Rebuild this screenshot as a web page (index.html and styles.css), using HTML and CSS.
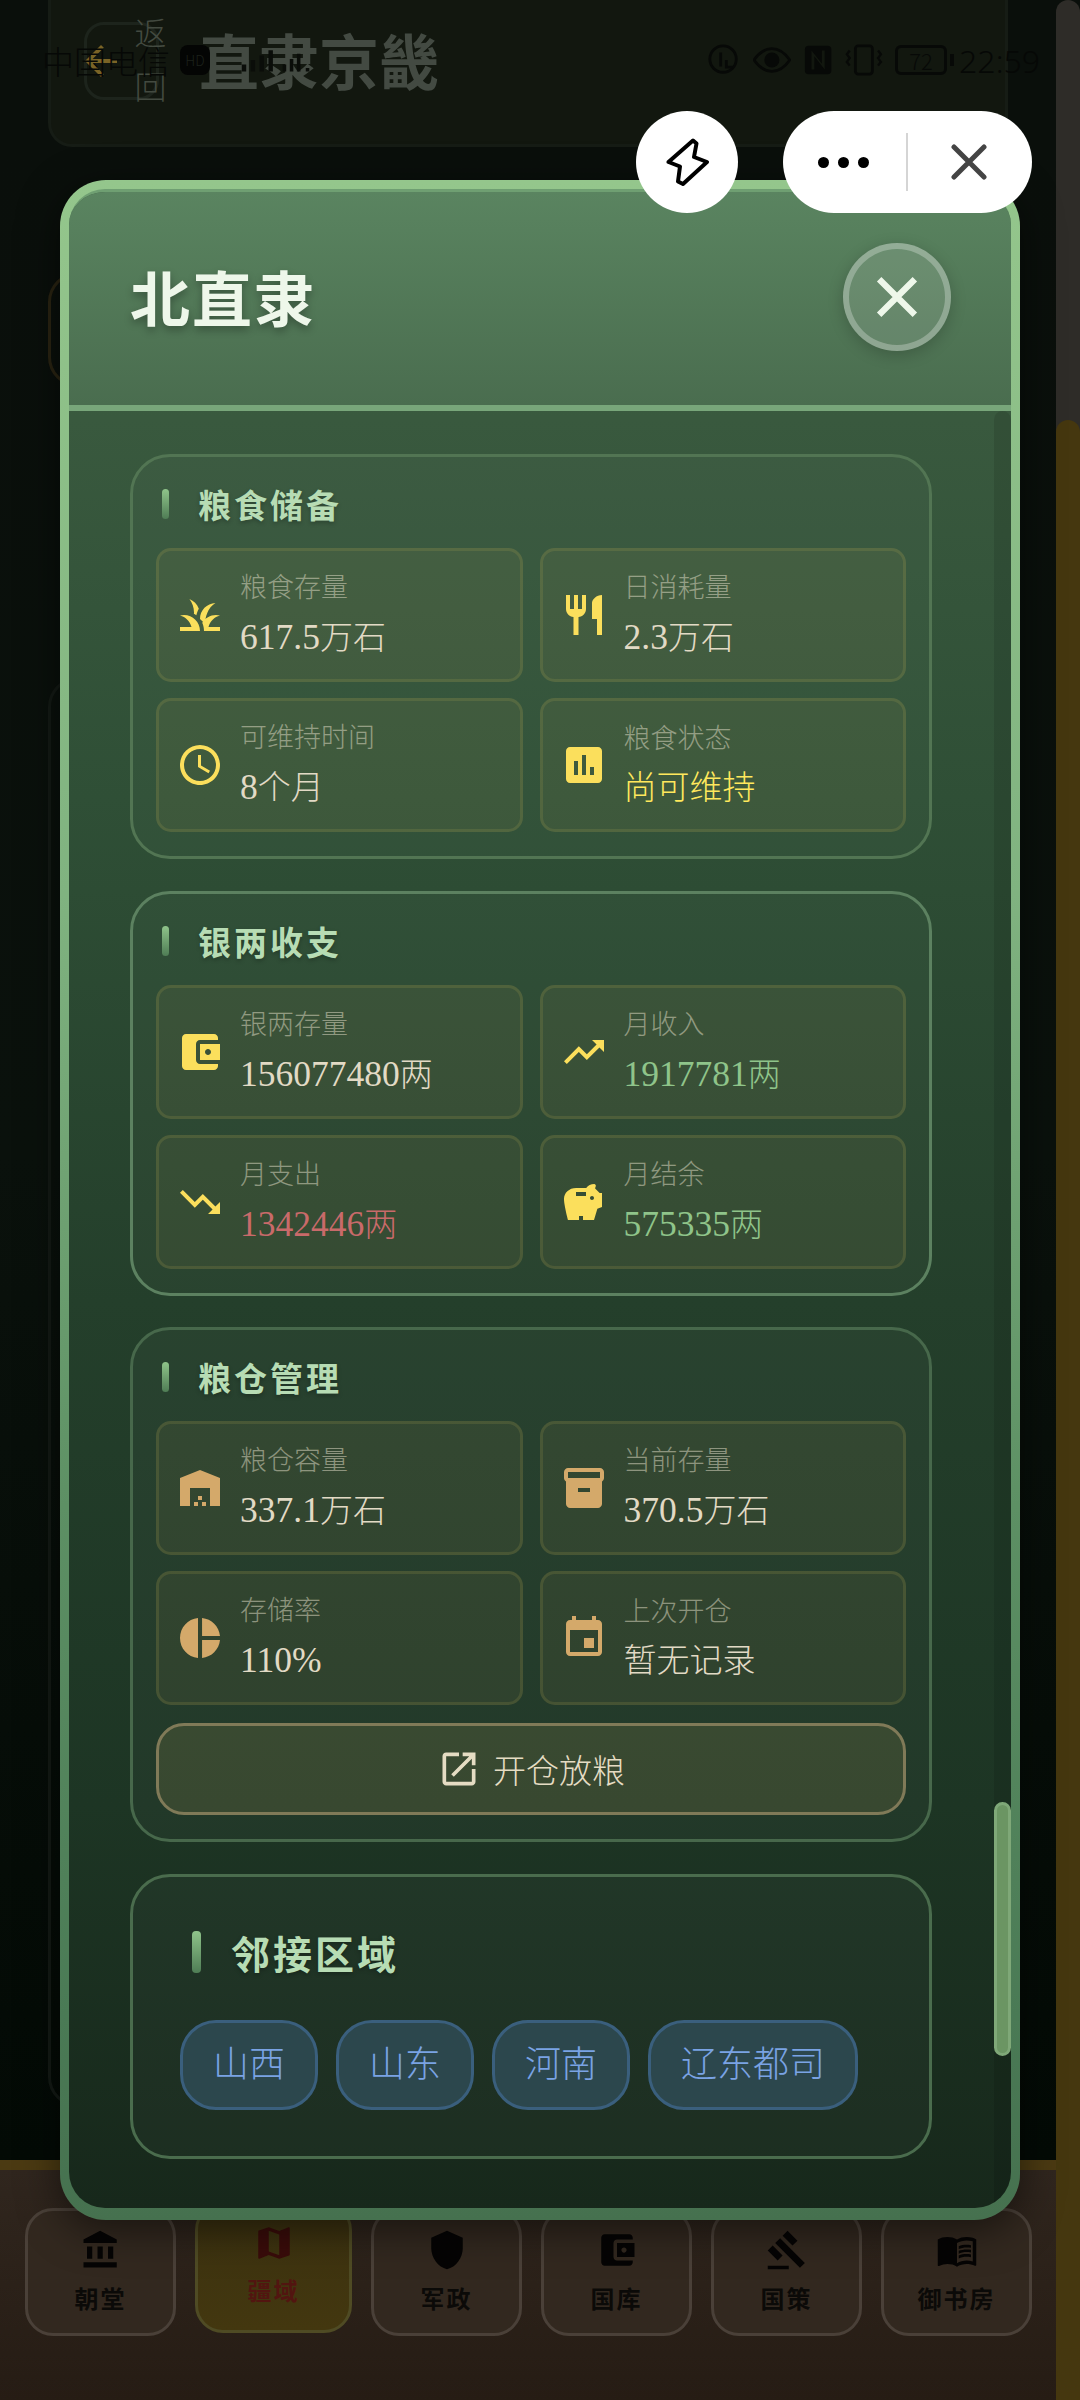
FILE: index.html
```html
<!DOCTYPE html>
<html>
  <head>
    <title>北直隶</title>
    <link rel="stylesheet" href="styles.css">
  </head>
  <body>
    <div class="app">
      <div class="screen">
        <header class="topbar">
          <button class="back-btn" type="button">
            <svg class="back-icon" viewBox="0 0 24 24"><path d="M20 11H7.83l5.59-5.59L12 4l-8 8 8 8 1.41-1.41L7.83 13H20v-2z"/></svg>
            <span class="back-text">返回</span>
          </button>
          <h1 class="topbar-title">直隶京畿</h1>
        </header>

        <main class="map-area">
          <div class="bg-card bg-card-gold"></div>
          <div class="bg-card"></div>
        </main>

        <nav class="bottom-nav">
          <div class="nav-btn">
            <svg viewBox="0 0 24 24"><path d="M4 10v7h3v-7H4zm6 0v7h3v-7h-3zM2 22h19v-3H2v3zm14-12v7h3v-7h-3zm-4.5-9L2 6v2h19V6l-9.5-5z"/></svg>
            <span>朝堂</span>
          </div>
          <div class="nav-btn active">
            <svg viewBox="0 0 24 24"><path d="M20.5 3l-.16.03L15 5.1 9 3 3.36 4.9c-.21.07-.36.25-.36.48V20.5c0 .28.22.5.5.5l.16-.03L9 18.9l6 2.1 5.64-1.9c.21-.07.36-.25.36-.48V3.5c0-.28-.22-.5-.5-.5zM15 19l-6-2.11V5l6 2.11V19z"/></svg>
            <span>疆域</span>
          </div>
          <div class="nav-btn">
            <svg viewBox="0 0 24 24"><path d="M12 1L3 5v6c0 5.55 3.84 10.74 9 12 5.16-1.26 9-6.45 9-12V5l-9-4z"/></svg>
            <span>军政</span>
          </div>
          <div class="nav-btn">
            <svg viewBox="0 0 24 24"><path d="M21 18v1c0 1.1-.9 2-2 2H5c-1.11 0-2-.9-2-2V5c0-1.1.89-2 2-2h14c1.1 0 2 .9 2 2v1h-9c-1.11 0-2 .9-2 2v8c0 1.1.89 2 2 2h9zm-9-2h10V8H12v8zm4-2.5c-.83 0-1.5-.67-1.5-1.5s.67-1.5 1.5-1.5 1.5.67 1.5 1.5-.67 1.5-1.5 1.5z"/></svg>
            <span>国库</span>
          </div>
          <div class="nav-btn">
            <svg viewBox="0 0 24 24"><path d="M1 21h12v2H1zM5.245 8.07l2.83-2.827 14.14 14.142-2.828 2.828zM12.317 1l5.657 5.656-2.83 2.83-5.654-5.66zM3.825 9.485l5.657 5.657-2.828 2.828-5.657-5.657z"/></svg>
            <span>国策</span>
          </div>
          <div class="nav-btn">
            <svg viewBox="0 0 24 24"><path d="M21 5c-1.11-.35-2.33-.5-3.5-.5-1.95 0-4.05.4-5.5 1.5-1.45-1.1-3.55-1.5-5.5-1.5S2.45 4.9 1 6v14.65c0 .25.25.5.5.5.1 0 .15-.05.25-.05C3.1 20.45 5.05 20 6.5 20c1.95 0 4.05.4 5.5 1.5 1.35-.85 3.8-1.5 5.5-1.5 1.65 0 3.35.3 4.75 1.05.1.05.15.05.25.05.25 0 .5-.25.5-.5V6c-.6-.45-1.25-.75-2-1zm0 13.5c-1.1-.35-2.3-.5-3.5-.5-1.7 0-4.15.65-5.5 1.5V8c1.35-.85 3.8-1.5 5.5-1.5 1.2 0 2.4.15 3.5.5v11.5z"/><path d="M17.5 10.5c.88 0 1.73.09 2.5.26V9.24C19.21 9.09 18.36 9 17.5 9c-1.7 0-3.24.29-4.5.83v1.66c1.13-.64 2.7-.99 4.5-.99zM13 12.49v1.66c1.13-.64 2.7-.99 4.5-.99.88 0 1.73.09 2.5.26V11.9c-.79-.15-1.64-.24-2.5-.24-1.7 0-3.24.3-4.5.83zM17.5 14.33c-1.7 0-3.24.29-4.5.83v1.66c1.13-.64 2.7-.99 4.5-.99.88 0 1.73.09 2.5.26v-1.52c-.79-.16-1.64-.24-2.5-.24z"/></svg>
            <span>御书房</span>
          </div>
        </nav>
      </div>
      <div class="edge-strip"><div class="edge-thumb"></div></div>
    </div>

    <!-- phone status bar, drawn over the dimmed page -->
    <div class="status-bar">
      <div class="status-left">
        <span class="carrier">中国电信</span>
        <span class="hd-pill">HD</span>
        <svg class="signal" viewBox="0 0 90 30"><path d="M2 20h5v8H2zM12 15h5v13h-5zM22 10h5v18h-5zM32 4h5v24h-5zM48 20h4v8h-4zM56 14h4v14h-4zM64 8h4v20h-4zM74 24h4v4h-4z"/></svg>
      </div>
      <div class="status-right">
        <svg class="st-icon" viewBox="0 0 36 36"><circle cx="17" cy="17" r="14" fill="none" stroke-width="3"/><path d="M13 10h3v15h-3zM19 18h3v6h5v3h-8z"/></svg>
        <svg class="st-icon" viewBox="0 0 40 36"><path d="M1 18C8 8 14 6 20 6s12 2 19 12c-7 10-13 12-19 12S8 28 1 18z" fill="none" stroke-width="3"/><circle cx="20" cy="18" r="8"/></svg>
        <svg class="st-icon" viewBox="0 0 32 36"><path fill-rule="evenodd" d="M6 3h20a4 4 0 0 1 4 4v22a4 4 0 0 1-4 4H6a4 4 0 0 1-4-4V7a4 4 0 0 1 4-4zM9 8v20h3V14l11 14V8h-3v14L9 8z"/></svg>
        <svg class="st-icon" viewBox="0 0 40 36"><rect x="11" y="3" width="18" height="30" rx="3" fill="none" stroke-width="3"/><path d="M5 8l-3 4 3 4-3 4 3 4M35 8l3 4-3 4 3 4-3 4" fill="none" stroke-width="2.5"/></svg>
        <div class="battery"><span class="battery-num">72</span></div>
        <span class="clock">22:59</span>
      </div>
    </div>

    <!-- province detail dialog -->
    <div class="modal">
      <div class="modal-panel">
        <div class="modal-header">
          <h2 class="modal-title">北直隶</h2>
          <button class="modal-close" type="button">
            <svg viewBox="0 0 40 40"><path d="M3 3l34 34M37 3L3 37"/></svg>
          </button>
        </div>

        <div class="modal-body">
          <section class="section">
            <h3 class="section-title">粮食储备</h3>
            <div class="stat-grid">
              <div class="stat">
                <svg class="stat-icon" viewBox="0 0 24 24"><path d="M12 20H2v-2h5.75C7.02 15.19 4.81 12.99 2 12.26 2.64 12.1 3.31 12 4 12c4.42 0 8 3.58 8 8zM22 12.26c-.64-.16-1.31-.26-2-.26-2.93 0-5.48 1.58-6.88 3.93.29.66.53 1.35.67 2.07.13.65.21 1.32.21 2h8v-2h-5.75c.73-2.81 2.94-5.01 5.75-5.74zM15.64 11.02c.78-2.09 2.23-3.84 4.09-5C15.44 6.16 12 9.67 12 14v.02c.95.79 1.77 1.74 2.42 2.8.06-2.02.45-4 1.22-5.8zM11.42 8.85C10.58 6.66 8.88 4.89 6.7 4 8.14 5.86 9 8.18 9 10.71c0 .21-.03.41-.04.61.43.24.83.52 1.22.82.21-.85.65-2.49 1.24-3.29z"/></svg>
                <div class="stat-text"><div class="stat-label">粮食存量</div><div class="stat-value"><span class="num">617.5</span>万石</div></div>
              </div>
              <div class="stat">
                <svg class="stat-icon" viewBox="0 0 24 24"><path d="M11 9H9V2H7v7H5V2H3v7c0 2.12 1.66 3.84 3.75 3.97V22h2.5v-9.03C11.34 12.84 13 11.12 13 9V2h-2v7zm5-3v8h2.5v8H21V2c-2.76 0-5 2.24-5 4z"/></svg>
                <div class="stat-text"><div class="stat-label">日消耗量</div><div class="stat-value"><span class="num">2.3</span>万石</div></div>
              </div>
              <div class="stat">
                <svg class="stat-icon" viewBox="0 0 24 24"><path d="M11.99 2C6.47 2 2 6.48 2 12s4.47 10 9.99 10C17.52 22 22 17.52 22 12S17.52 2 11.99 2zM12 20c-4.42 0-8-3.58-8-8s3.58-8 8-8 8 3.58 8 8-3.58 8-8 8zm.5-13H11v6l5.25 3.15.75-1.23-4.5-2.67z"/></svg>
                <div class="stat-text"><div class="stat-label">可维持时间</div><div class="stat-value"><span class="num">8</span>个月</div></div>
              </div>
              <div class="stat">
                <svg class="stat-icon" viewBox="0 0 24 24"><path d="M19 3H5c-1.1 0-2 .9-2 2v14c0 1.1.9 2 2 2h14c1.1 0 2-.9 2-2V5c0-1.1-.9-2-2-2zM9 17H7v-7h2v7zm4 0h-2V7h2v10zm4 0h-2v-4h2v4z"/></svg>
                <div class="stat-text"><div class="stat-label">粮食状态</div><div class="stat-value value-warn">尚可维持</div></div>
              </div>
            </div>
          </section>

          <section class="section section-lit">
            <h3 class="section-title">银两收支</h3>
            <div class="stat-grid">
              <div class="stat">
                <svg class="stat-icon" viewBox="0 0 24 24"><path d="M21 18v1c0 1.1-.9 2-2 2H5c-1.11 0-2-.9-2-2V5c0-1.1.89-2 2-2h14c1.1 0 2 .9 2 2v1h-9c-1.11 0-2 .9-2 2v8c0 1.1.89 2 2 2h9zm-9-2h10V8H12v8zm4-2.5c-.83 0-1.5-.67-1.5-1.5s.67-1.5 1.5-1.5 1.5.67 1.5 1.5-.67 1.5-1.5 1.5z"/></svg>
                <div class="stat-text"><div class="stat-label">银两存量</div><div class="stat-value"><span class="num">156077480</span>两</div></div>
              </div>
              <div class="stat">
                <svg class="stat-icon" viewBox="0 0 24 24"><path d="M16 6l2.29 2.29-4.88 4.88-4-4L2 16.59 3.41 18l6-6 4 4 6.3-6.29L22 12V6z"/></svg>
                <div class="stat-text"><div class="stat-label">月收入</div><div class="stat-value value-good"><span class="num">1917781</span>两</div></div>
              </div>
              <div class="stat">
                <svg class="stat-icon" viewBox="0 0 24 24"><path d="M16 18l2.29-2.29-4.88-4.88-4 4L2 7.41 3.41 6l6 6 4-4 6.3 6.29L22 12v6z"/></svg>
                <div class="stat-text"><div class="stat-label">月支出</div><div class="stat-value value-bad"><span class="num">1342446</span>两</div></div>
              </div>
              <div class="stat">
                <svg class="stat-icon" viewBox="0 0 24 24"><path d="M19.83 7.5l-2.27-2.27c.07-.42.18-.81.32-1.15.11-.26.04-.56-.15-.75-.15-.22-.37-.33-.61-.33-1.64 0-3.09.79-4 2h-5C4.46 5 2 7.46 2 10.5S4 21 4 21h5.5v-2h2v2H17l1.68-5.59L21 14.47V7.5h-1.17zM13 9H8V7h5v2zm3 2c-.55 0-1-.45-1-1s.45-1 1-1 1 .45 1 1-.45 1-1 1z"/></svg>
                <div class="stat-text"><div class="stat-label">月结余</div><div class="stat-value value-good"><span class="num">575335</span>两</div></div>
              </div>
            </div>
          </section>

          <section class="section section-dim">
            <h3 class="section-title">粮仓管理</h3>
            <div class="stat-grid">
              <div class="stat">
                <svg class="stat-icon icon-tan" viewBox="0 0 24 24"><path d="M22 21V7L12 3 2 7v14h5v-9h10v9h5zm-11-2H9v2h2v-2zm2-3h-2v2h2v-2zm2 3h-2v2h2v-2z"/></svg>
                <div class="stat-text"><div class="stat-label">粮仓容量</div><div class="stat-value"><span class="num">337.1</span>万石</div></div>
              </div>
              <div class="stat">
                <svg class="stat-icon icon-tan" viewBox="0 0 24 24"><path d="M20 2H4c-1 0-2 .9-2 2v3.01c0 .72.43 1.34 1 1.69V20c0 1.1 1.1 2 2 2h14c.9 0 2-.9 2-2V8.7c.57-.35 1-.97 1-1.69V4c0-1.1-1-2-2-2zm-5 12H9v-2h6v2zm5-7H4V4h16v3z"/></svg>
                <div class="stat-text"><div class="stat-label">当前存量</div><div class="stat-value"><span class="num">370.5</span>万石</div></div>
              </div>
              <div class="stat">
                <svg class="stat-icon icon-tan" viewBox="0 0 24 24"><path d="M11 2v20c-5.07-.5-9-4.79-9-10s3.93-9.5 9-10zm2.03 0v8.99H22c-.47-4.74-4.24-8.52-8.97-8.99zm0 11.01V22c4.74-.47 8.5-4.25 8.97-8.99h-8.97z"/></svg>
                <div class="stat-text"><div class="stat-label">存储率</div><div class="stat-value"><span class="num">110%</span></div></div>
              </div>
              <div class="stat">
                <svg class="stat-icon icon-tan" viewBox="0 0 24 24"><path d="M17 12h-5v5h5v-5zM16 1v2H8V1H6v2H5c-1.11 0-1.99.9-1.99 2L3 19c0 1.1.89 2 2 2h14c1.1 0 2-.9 2-2V5c0-1.1-.9-2-2-2h-1V1h-2zm3 18H5V8h14v11z"/></svg>
                <div class="stat-text"><div class="stat-label">上次开仓</div><div class="stat-value">暂无记录</div></div>
              </div>
            </div>
            <button class="open-btn" type="button">
              <svg viewBox="0 0 24 24"><path d="M19 19H5V5h7V3H5c-1.11 0-2 .9-2 2v14c0 1.1.89 2 2 2h14c1.1 0 2-.9 2-2v-7h-2v7zM14 3v2h3.59l-9.83 9.83 1.41 1.41L19 6.41V10h2V3h-7z"/></svg>
              <span>开仓放粮</span>
            </button>
          </section>

          <section class="section section-big">
            <h3 class="section-title">邻接区域</h3>
            <div class="chips">
              <span class="chip">山西</span>
              <span class="chip">山东</span>
              <span class="chip">河南</span>
              <span class="chip">辽东都司</span>
            </div>
          </section>
        </div>

        <div class="scroll-track"><div class="scroll-thumb"></div></div>
      </div>
    </div>

    <!-- mini program capsule -->
    <div class="capsule-wrap">
      <div class="bolt-btn">
        <svg viewBox="0 0 48 48"><path d="M5.5 24L30 2.5l3.5 3L31 19l13 5-24 22-5-2.5 2-15z"/></svg>
      </div>
      <div class="capsule">
        <div class="capsule-dots"><i></i><i></i><i></i></div>
        <div class="capsule-line"></div>
        <svg class="capsule-x" viewBox="0 0 36 36"><path d="M3 3l30 30M33 3L3 33"/></svg>
      </div>
    </div>
  </body>
</html>
```

FILE: styles.css
```css
* {
  box-sizing: border-box;
}

html,
body {
  margin: 0;
  padding: 0;
}

body {
  width: 1080px;
  height: 2400px;
  position: relative;
  overflow: hidden;
  font-family: "Liberation Serif", "Noto Sans CJK SC", serif;
  font-weight: 300;
  background-color: #0a0f0b;
}

h1,
h2,
h3 {
  margin: 0;
}

button {
  font-family: inherit;
  font-weight: inherit;
  padding: 0;
}

/* dimmed page behind the dialog */
.app {
  display: flex;
  height: 2400px;
}

.screen {
  flex: 1;
  display: flex;
  flex-direction: column;
  min-width: 0;
}

.edge-strip {
  width: 24px;
  background-color: #2e2c28;
  border-radius: 12px 12px 0 0;
  padding-top: 420px;
}

.edge-thumb {
  height: 1980px;
  background-color: #45370f;
  border-radius: 12px 12px 0 0;
}

.topbar {
  height: 147px;
  margin: 0 48px;
  padding: 22px 33px 0;
  display: flex;
  align-items: flex-start;
  flex-shrink: 0;
  background-color: #12170f;
  border: 3px solid #161c15;
  border-top: none;
  border-radius: 0 0 24px 24px;
}

.back-btn {
  width: 75px;
  height: 78px;
  flex-shrink: 0;
  display: flex;
  align-items: center;
  justify-content: center;
  gap: 10px;
  background: none;
  border: 3px solid #1d241c;
  border-radius: 20px;
}

.back-icon {
  width: 48px;
  height: 48px;
  flex-shrink: 0;
  fill: #7a6426;
}

.back-text {
  width: 32px;
  flex-shrink: 0;
  font-size: 32px;
  line-height: 54px;
  color: #434a40;
}

.topbar-title {
  margin-left: 40px;
  margin-top: -3px;
  font-family: "Noto Sans CJK SC", sans-serif;
  font-size: 60px;
  line-height: 80px;
  font-weight: 700;
  color: #434a42;
}

.map-area {
  flex: 1;
  padding: 125px 48px 0;
  background: linear-gradient(180deg, #0a0f0b 0%, #0a110c 50%, #030a05 100%);
  display: flex;
  flex-direction: column;
  gap: 290px;
}

.bg-card {
  height: 1430px;
  border: 3px solid #141a15;
  border-radius: 30px;
}

.bg-card-gold {
  height: 115px;
  border-color: #2a2412;
}

.bottom-nav {
  height: 240px;
  flex-shrink: 0;
  padding: 38px 24px 0 25px;
  display: flex;
  gap: 19px;
  align-items: flex-start;
  border-top: 10px solid #4b3a12;
  background: linear-gradient(180deg, #30261e 0%, #261c14 100%);
}

.nav-btn {
  width: 151px;
  height: 128px;
  padding-top: 18px;
  display: flex;
  flex-direction: column;
  align-items: center;
  gap: 11px;
  background-color: #32281f;
  border: 3px solid #4a4038;
  border-radius: 28px;
  font-family: "Noto Sans CJK SC", sans-serif;
  font-size: 24px;
  line-height: 32px;
  font-weight: 700;
  letter-spacing: 2px;
  color: #0b0a08;
}

.nav-btn svg {
  width: 42px;
  height: 42px;
  fill: #050404;
}

.nav-btn.active {
  width: 157px;
  margin-top: -6px;
  height: 131px;
  padding-top: 17px;
  gap: 10px;
  background: linear-gradient(180deg, #3b3110 0%, #43370f 100%);
  border-color: #4f4b24;
  color: #521510;
}

.nav-btn.active svg {
  fill: #3a0c0a;
}

/* status bar */
.status-bar {
  position: absolute;
  left: 0;
  top: 40px;
  width: 1056px;
  height: 40px;
  padding: 0 16px 0 42px;
  display: flex;
  align-items: center;
  justify-content: space-between;
  color: #060806;
  font-family: "Noto Sans CJK SC", sans-serif;
}

.status-left,
.status-right {
  display: flex;
  align-items: center;
}

.carrier {
  font-size: 32px;
  font-weight: 300;
}

.hd-pill {
  margin-left: 10px;
  width: 30px;
  height: 30px;
  border-radius: 8px;
  background-color: #040504;
  color: #1c211b;
  font-size: 14px;
  text-align: center;
  line-height: 30px;
}

.signal {
  margin-left: 30px;
  width: 80px;
  height: 28px;
  fill: #0a0d09;
}

.st-icon {
  height: 34px;
  margin-right: 12px;
  fill: #070907;
  stroke: #070907;
  stroke-width: 0;
}

.battery {
  width: 52px;
  height: 30px;
  margin-right: 12px;
  border: 3px solid #070907;
  border-radius: 6px;
  text-align: center;
  font-size: 22px;
  line-height: 24px;
  color: #070907;
  position: relative;
}

.battery::after {
  content: "";
  position: absolute;
  right: -10px;
  top: 6px;
  width: 4px;
  height: 12px;
  background-color: #070907;
}

.clock {
  font-family: "Noto Sans", sans-serif;
  font-size: 32px;
  font-weight: 300;
}

/* dialog */
.modal {
  position: absolute;
  left: 60px;
  top: 180px;
  width: 960px;
  height: 2040px;
  padding: 9px 9px 12px;
  border-radius: 46px;
  background: linear-gradient(180deg, #94c68c 0%, #80b380 35%, #5d9064 65%, #4a7a55 90%, #46714f 100%);
  box-shadow: 0 10px 40px rgba(0, 0, 0, 0.5);
}

.modal-panel {
  position: relative;
  height: 100%;
  overflow: hidden;
  border-top: 3px solid #6f9f72;
  border-radius: 36px;
  background: linear-gradient(180deg, #3f5f43 0%, #2f4f36 30%, #243f2b 55%, #1d3524 80%, #17281b 100%);
}

.modal-header {
  height: 219px;
  padding: 0 60px 3px 61px;
  display: flex;
  align-items: center;
  justify-content: space-between;
  border-bottom: 6px solid #78a67a;
  background: linear-gradient(180deg, #5a8460 0%, #4a6d4f 100%);
}

.modal-title {
  margin-top: -4px;
  font-family: "Noto Sans CJK SC", sans-serif;
  font-size: 60px;
  font-weight: 700;
  letter-spacing: 2px;
  color: #eef7ea;
  text-shadow: 0 4px 8px rgba(0, 0, 0, 0.3);
}

.modal-close {
  width: 108px;
  height: 108px;
  display: flex;
  align-items: center;
  justify-content: center;
  background-color: rgba(255, 255, 255, 0.13);
  border: 6px solid rgba(255, 255, 255, 0.27);
  border-radius: 50%;
  box-shadow: 0 4px 16px rgba(0, 0, 0, 0.2);
}

.modal-close svg {
  width: 42px;
  height: 42px;
  fill: none;
  stroke: #eef7ea;
  stroke-width: 6;
}

.modal-body {
  padding: 43px 79px 0 61px;
  display: flex;
  flex-direction: column;
  gap: 31.5px;
}

.section {
  padding: 26px 23px 24px;
  background-color: rgba(255, 255, 255, 0.025);
  border: 3px solid #527553;
  border-radius: 40px;
}

.section-lit {
  border-color: #5c8160;
}

.section-dim {
  border-color: #47684b;
}

.section-title {
  position: relative;
  height: 44px;
  margin-bottom: 22px;
  margin-top: -1px;
  padding-left: 42px;
  font-family: "Noto Sans CJK SC", sans-serif;
  font-size: 33px;
  line-height: 44px;
  font-weight: 700;
  letter-spacing: 3px;
  color: #b7dcb4;
  text-shadow: 0 2px 4px rgba(0, 0, 0, 0.25);
}

.section-title::before {
  content: "";
  position: absolute;
  left: 6px;
  top: 7px;
  width: 7px;
  height: 30px;
  border-radius: 4px;
  background: linear-gradient(180deg, #8fc48a 0%, #4f7d55 100%);
}

.stat-grid {
  display: grid;
  grid-template-columns: 1fr 1fr;
  gap: 16px 17px;
}

.stat {
  height: 134px;
  padding: 0 16px 0 17px;
  display: flex;
  align-items: center;
  gap: 16px;
  background-color: rgba(212, 175, 100, 0.07);
  border: 3px solid rgba(200, 180, 90, 0.15);
  border-radius: 15px;
}

.stat-icon {
  width: 48px;
  height: 48px;
  flex-shrink: 0;
  fill: #fbdf5c;
}

.icon-tan {
  fill: #d4a96a;
}

.stat-text {
  min-width: 0;
}

.stat-label {
  font-size: 27px;
  line-height: 36px;
  color: rgba(232, 226, 205, 0.5);
}

.stat-value {
  margin-top: 9px;
  font-size: 33px;
  line-height: 44px;
  color: #e2dac5;
}

.num {
  font-size: 35.5px;
}

.value-warn {
  color: #ffe85c;
}

.value-good {
  color: #8fc48a;
}

.value-bad {
  color: #c96a6a;
}

.open-btn {
  width: 100%;
  height: 92px;
  margin-top: 18px;
  display: flex;
  align-items: center;
  justify-content: center;
  gap: 12px;
  background-color: rgba(212, 175, 100, 0.13);
  border: 3px solid #807a58;
  border-radius: 28px;
  font-size: 33px;
  color: #e5dcc3;
}

.open-btn svg {
  width: 44px;
  height: 44px;
  fill: #e5dcc3;
}

.section-big {
  height: 285px;
  padding: 50px 47px;
  border-color: #4a6c4d;
}

.section-big .section-title {
  height: 50px;
  margin-top: 0;
  margin-bottom: 43px;
  padding-left: 51px;
  font-size: 39px;
  line-height: 50px;
  letter-spacing: 3px;
}

.section-big .section-title::before {
  left: 12px;
  top: 4px;
  width: 9px;
  height: 42px;
}

.chips {
  display: flex;
  gap: 18px;
}

.chip {
  height: 90px;
  padding: 0 30px;
  background-color: #2c474d;
  border: 3px solid #3a5f7d;
  border-radius: 36px;
  font-size: 36px;
  line-height: 84px;
  color: #7aa3e4;
}

.scroll-track {
  position: absolute;
  right: 0;
  top: 219px;
  bottom: 0;
  width: 17px;
  padding-top: 1391px;
  background-color: rgba(0, 0, 0, 0.1);
  border-radius: 10px 10px 0 0;
}

.scroll-thumb {
  height: 254px;
  background-color: #6b9563;
  border: 3px solid #7fa878;
  border-radius: 10px;
}

/* capsule */
.capsule-wrap {
  position: absolute;
  left: 636px;
  top: 111px;
  display: flex;
  gap: 45px;
}

.bolt-btn {
  width: 102px;
  height: 102px;
  display: flex;
  align-items: center;
  justify-content: center;
  background-color: #fff;
  border-radius: 50%;
}

.bolt-btn svg {
  width: 48px;
  height: 48px;
  fill: none;
  stroke: #000;
  stroke-width: 4;
  stroke-linejoin: round;
}

.capsule {
  width: 249px;
  height: 102px;
  padding-left: 35px;
  display: flex;
  align-items: center;
  background-color: #fff;
  border-radius: 51px;
}

.capsule-dots {
  display: flex;
  gap: 9px;
}

.capsule-dots i {
  width: 11px;
  height: 11px;
  border-radius: 50%;
  background-color: #000;
}

.capsule-line {
  width: 2px;
  height: 58px;
  margin-left: 37px;
  background-color: #d5d5d5;
}

.capsule-x {
  width: 36px;
  height: 36px;
  margin-left: 43px;
  fill: none;
  stroke: #444;
  stroke-width: 5;
  stroke-linecap: round;
}
```
